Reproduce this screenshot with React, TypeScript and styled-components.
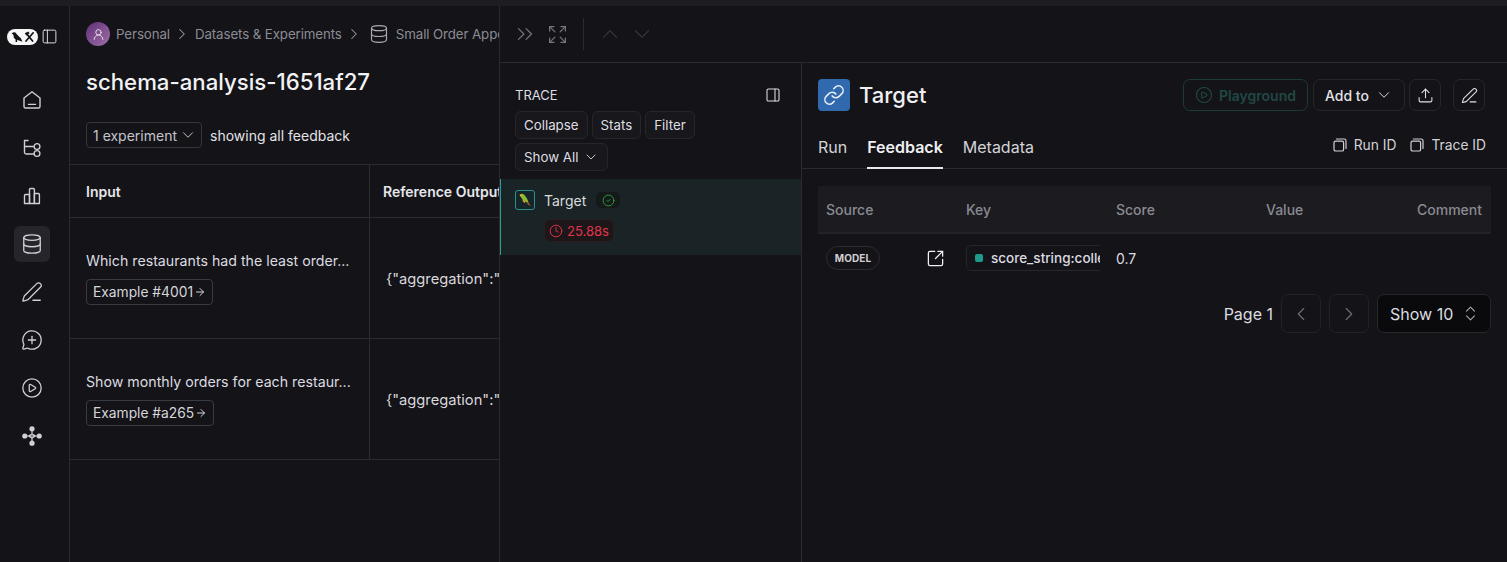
import React from "react";
import styled, { createGlobalStyle } from "styled-components";
import {
  ChevronsRight, Expand, ChevronUp, ChevronDown, ChevronRight, ChevronLeft, PanelLeft, PanelRight,
  Database, PenLine, MessageCirclePlus, CirclePlay, Link, Upload, SquareArrowOutUpRight, ChevronsUpDown,
  Clock, CircleCheck, ArrowRight, UserRound,
} from "lucide-react";

const Global = createGlobalStyle`
  html, body { margin: 0; padding: 0; height: 100%; background: #131318; overflow: hidden; }
  body { font-family: Inter, "Liberation Sans", sans-serif; color: #e8e8ec; }
  #root { height: 100%; }
  * { box-sizing: border-box; }
`;

const Page = styled.div`
  height: 562px; display: flex; flex-direction: column; overflow: hidden; background: #131318;
`;
const TopStrip = styled.div`height: 6px; flex: none; background: #1d1d22;`;
const Body = styled.div`flex: 1; display: flex; min-height: 0;`;

const Sidebar = styled.nav`
  width: 70px; flex: none; border-right: 1px solid #2a2a30; display: flex; flex-direction: column;
`;
const LogoRow = styled.div`
  height: 60px; width: 100%; padding: 1px 0 0 7px; display: flex; align-items: center; gap: 3px; color: #dcdce0;
`;
const NavList = styled.div`margin: 16px 0 0 14px; display: flex; flex-direction: column; gap: 12px;`;
const NavItem = styled.div<{ $active?: boolean }>`
  width: 36px; height: 36px; border-radius: 6px; display: flex; align-items: center; justify-content: center;
  color: #cfcfd4; background: ${(p) => (p.$active ? "#25252b" : "transparent")};
`;

const Left = styled.section`
  width: 429px; flex: none; overflow: hidden; display: flex; flex-direction: column;
`;
const Crumbs = styled.div`
  height: 56px; padding-left: 16px; display: flex; align-items: center; white-space: nowrap; font-size: 13.3px; letter-spacing: -0.1px; color: #8b8b94;
`;
const Avatar = styled.div`
  width: 24px; height: 24px; border-radius: 50%; flex: none; margin-right: 6px; display: flex; align-items: center; justify-content: center;
  background: linear-gradient(135deg, #5f2f78, #a070a8); color: #eee;
`;
const CrumbSep = styled.span`display: flex; margin: 0 4px 0 3px; color: #9a9aa2;`;
const CrumbDb = styled.span`display: flex; margin: 0 7px 0 2px; color: #a8a8b0;`;
const Title = styled.h1`
  margin: 0; padding: 3px 0 0 16px; font-size: 22.2px; line-height: 34px; font-weight: 500; color: #f2f2f4; letter-spacing: 0; white-space: nowrap;
`;
const FilterRow = styled.div`
  margin-top: 23px; padding-left: 16px; display: flex; align-items: center; gap: 8px; font-size: 14px; color: #e4e4e8; white-space: nowrap;
`;
const ExpSelect = styled.div`
  width: 116px; height: 26px; border: 1px solid #36363d; border-radius: 4px; display: flex; align-items: center; justify-content: space-between;
  padding: 0 4px 0 6px; color: #c4c4ca; font-size: 14px;
`;
const Grid = styled.div`
  margin-top: 16px; display: grid; grid-template-columns: 300px 400px; border-top: 1px solid #2a2a30;
`;
const HeadCell = styled.div<{ $right?: boolean }>`
  height: 53px; display: flex; align-items: center; padding-left: ${(p) => (p.$right ? "13px" : "16px")}; font-size: 14px; font-weight: 600; color: #e6e6ea;
  border-bottom: 1px solid #2a2a30; border-right: ${(p) => (p.$right ? "none" : "1px solid #2a2a30")}; white-space: nowrap;
`;
const InputCell = styled.div`
  height: 121px; padding-left: 16px; display: flex; flex-direction: column; justify-content: center; gap: 8px;
  border-bottom: 1px solid #2a2a30; border-right: 1px solid #2a2a30;
`;
const OutCell = styled.div`
  height: 121px; padding: 1px 0 0 16px; display: flex; align-items: center; border-bottom: 1px solid #2a2a30; font-size: 14.7px; color: #d8d8dc; white-space: nowrap;
`;
const Question = styled.div`font-size: 14.2px; line-height: 20px; color: #dcdce0; white-space: nowrap;`;
const ExampleTag = styled.div`
  align-self: flex-start; height: 26px; padding: 0 6px; border: 1px solid #3a3a41; border-radius: 4px; display: flex; align-items: center; gap: 1px; font-size: 13.8px; color: #d6d6da;
`;

const Drawer = styled.section`
  flex: 1; min-width: 0; border-left: 1px solid #2a2a30; display: flex; flex-direction: column;
`;
const DrawerBar = styled.div`
  height: 57px; flex: none; border-bottom: 1px solid #2a2a30; padding-left: 12px; display: flex; align-items: center; color: #77777f;
`;
const BarIconGroup = styled.div`display: flex; align-items: center; gap: 9px; padding-right: 15px; height: 32px; border-right: 1px solid #2a2a30;`;
const BarMuted = styled.div`display: flex; align-items: center; gap: 6px; padding-left: 13px; color: #33333a;`;
const DrawerBody = styled.div`flex: 1; display: flex; min-height: 0;`;

const TracePane = styled.div`width: 302px; flex: none; border-right: 1px solid #2a2a30; display: flex; flex-direction: column;`;
const TraceHead = styled.div`
  padding: 23px 20px 0 15px; display: flex; align-items: center; justify-content: space-between; font-size: 13px; color: #dedee2; height: 40px;
`;
const ToolRow = styled.div`padding: 8px 15px 0; display: flex; flex-wrap: wrap; gap: 4px;`;
const ToolBtn = styled.div`
  height: 28px; padding: 0 8px; border: 1px solid #26262c; border-radius: 6px; display: flex; align-items: center; gap: 5px; font-size: 13.3px; color: #dedee2; background: #17171c;
`;
const RunRow = styled.div`
  margin-top: 8px; height: 76px; background: #1a2427; border-left: 1px solid #2f9d97; padding: 11px 0 0 14px;
`;
const RunTop = styled.div`display: flex; align-items: center; font-size: 14px; color: #d9dcdd;`;
const RunIcon = styled.div`
  width: 20px; height: 20px; border: 1px solid #2f8f8c; border-radius: 3px; background: #14262a; margin-right: 9px; display: flex; align-items: center; justify-content: center;
`;
const CheckPill = styled.div`
  width: 24px; height: 16px; margin-left: 10px; border-radius: 5px; background: #15191a; color: #2aa63a; display: flex; align-items: center; justify-content: center;
`;
const TimePill = styled.div`
  margin: 9px 0 0 29px; width: 70px; height: 23px; border-radius: 6px; background: #1d1719; border: 1px solid #2a1d20; color: #e0344e; font-size: 13px;
  display: flex; align-items: center; justify-content: center; gap: 4px;
`;

const Detail = styled.div`flex: 1; min-width: 0; display: flex; flex-direction: column; padding: 16px 16px 0 16px;`;
const DetailHead = styled.div`display: flex; align-items: center; height: 32px; padding-right: 6px;`;
const ChainIcon = styled.div`
  width: 32px; height: 32px; border-radius: 4px; background: #3069ae; color: #e6eef8; display: flex; align-items: center; justify-content: center; flex: none; margin-right: 9px;
`;
const DetailTitle = styled.div`font-size: 22px; font-weight: 500; color: #f0f0f2; flex: 1;`;
const HeadBtn = styled.div<{ $gap?: number; $disabled?: boolean }>`
  height: 32px; border-radius: 7px; display: flex; align-items: center; justify-content: center; font-size: 14px; font-weight: 500; gap: 6px;
  margin-left: ${(p) => p.$gap ?? 4}px; border: 1px solid ${(p) => (p.$disabled ? "#1d3a3a" : "#26262c")};
  color: ${(p) => (p.$disabled ? "#204844" : "#e2e2e6")};
`;
const PlayBtn = styled(HeadBtn)`width: 125px; font-weight: 600;`;
const AddBtn = styled(HeadBtn)`width: 92px;`;
const SquareBtn = styled(HeadBtn)`width: 32px;`;
const TabBar = styled.div`
  margin: 20px -16px 0; padding: 0 21px 0 16px; height: 38px; flex: none; border-bottom: 1px solid #2a2a30; display: flex; align-items: flex-start; justify-content: space-between;
`;
const Tabs = styled.div`display: flex; gap: 20px;`;
const Tab = styled.div<{ $active?: boolean }>`
  height: 38px; font-size: 16px; line-height: 24px; padding-top: 4px; font-weight: ${(p) => (p.$active ? 600 : 400)}; color: ${(p) => (p.$active ? "#f0f0f2" : "#d4d4d8")};
  border-bottom: 2px solid ${(p) => (p.$active ? "#e8e8ec" : "transparent")};
`;
const IdLinks = styled.div`display: flex; gap: 14px; padding-top: 6px;`;
const IdLink = styled.div`display: flex; align-items: center; gap: 7px; font-size: 13.8px; color: #d2d2d6;`;

const Table = styled.div`margin-top: 17px; width: 673px;`;
const THead = styled.div`
  height: 48px; background: #1b1b20; border-bottom: 2px solid #222227; display: grid; grid-template-columns: 140px 150px 150px 150px 83px; align-items: center; font-size: 14px; font-weight: 500; color: #8a8a92;
`;
const TH = styled.div<{ $right?: boolean }>`padding-left: 8px; ${(p) => p.$right && "text-align: right; padding: 0 9px 0 0; white-space: nowrap;"}`;
const TRow = styled.div`height: 48px; display: grid; grid-template-columns: 140px 150px 150px; align-items: center;`;
const SourceCell = styled.div`display: flex; align-items: center; justify-content: space-between; padding: 0 13px 0 8px; color: #f0f0f2;`;
const ModelPill = styled.div`
  width: 54px; height: 24px; border: 1px solid #2b2b31; border-radius: 12px; display: flex; align-items: center; justify-content: center; font-size: 10px; font-weight: 700; letter-spacing: 0.1px; color: #d0d0d4;
`;
const KeyCell = styled.div`padding-left: 8px; overflow: hidden; width: 142px;`;
const KeyChip = styled.div`
  width: 170px; height: 26px; border: 1px solid #26262c; border-radius: 5px; padding-left: 8px; display: flex; align-items: center; gap: 8px; font-size: 13.5px; font-weight: 500; color: #dcdce0; white-space: nowrap; overflow: hidden;
`;
const Dot = styled.span`width: 8px; height: 8px; border-radius: 2px; background: #1f9b8c; flex: none;`;
const ScoreCell = styled.div`padding-left: 8px; font-size: 14px; color: #dcdce0;`;
const Pager = styled.div`margin-top: 12px; display: flex; align-items: center; justify-content: flex-end; gap: 8px;`;
const PageLabel = styled.div`font-size: 16px; color: #dcdce0;`;
const PageBtn = styled.div`
  width: 40px; height: 39px; border: 1px solid #212126; border-radius: 7px; display: flex; align-items: center; justify-content: center; color: #6f6f77;
`;
const ShowBtn = styled.div`
  width: 114px; height: 39px; background: #0a0a0d; border: 1px solid #26262c; border-radius: 7px; display: flex; align-items: center; justify-content: space-between; padding: 0 10px 0 12px; font-size: 16px; color: #dcdce0;
`;
const UpDown = styled.span`display: flex; color: #a8a8ae;`;

const HomeIcon = () => (
  <svg width="20" height="20" viewBox="0 0 20 20" fill="none" stroke="currentColor" strokeWidth="1.4" strokeLinecap="round" strokeLinejoin="round">
    <path d="M2 8 10 1.8 18 8V16.4A1.6 1.6 0 0 1 16.4 18H3.6A1.6 1.6 0 0 1 2 16.4Z" />
    <path d="M6.5 14.4h7" />
  </svg>
);
const TreeIcon = () => (
  <svg width="20" height="20" viewBox="0 0 20 20" fill="none" stroke="currentColor" strokeWidth="1.4" strokeLinecap="round" strokeLinejoin="round">
    <path d="M2.5 2.5h3.5M2.5 2.5v12A1.6 1.6 0 0 0 4.1 16H11.5" />
    <path d="M2.5 8.5h9" />
    <circle cx="15" cy="8.5" r="2.9" /><circle cx="15" cy="15.5" r="2.9" />
  </svg>
);
const BarsIcon = () => (
  <svg width="20" height="20" viewBox="0 0 20 20" fill="none" stroke="currentColor" strokeWidth="1.4" strokeLinejoin="round">
    <path d="M2.5 17.5V9.5a1 1 0 0 1 1-1H7.5v9Z" />
    <path d="M7.5 17.5V3.5a1 1 0 0 1 1-1h2.9a1 1 0 0 1 1 1v14Z" />
    <path d="M12.4 17.5V7.5h4a1 1 0 0 1 1 1v9Z" />
  </svg>
);
const NodesIcon = () => (
  <svg width="20" height="20" viewBox="0 0 20 20" fill="none" stroke="currentColor" strokeWidth="1.2">
    <g fill="currentColor" stroke="none">
      <circle cx="10" cy="2.8" r="2.6" /><circle cx="2.8" cy="10" r="2.6" /><circle cx="17.2" cy="10" r="2.6" /><circle cx="10" cy="17.2" r="2.6" />
    </g>
    <path d="M10 3v5M4 10h12M10 8 6.5 10 10 12l3.5-2Z" />
    <path d="M10 12v4" />
  </svg>
);
const CopyIcon = () => (
  <svg width="14" height="14" viewBox="0 0 14 14" fill="none" stroke="currentColor" strokeWidth="1.2" strokeLinejoin="round">
    <rect x="1" y="3.2" width="9.6" height="9.8" rx="1.6" />
    <path d="M3.4 1h7.8A1.8 1.8 0 0 1 13 2.8v7.6" strokeLinecap="round" />
  </svg>
);
const Logo = () => (
  <svg width="31" height="16" viewBox="0 0 31 16">
    <rect width="31" height="16" rx="8" fill="#f6f6f6" />
    <path d="M4.6 4.6 6.4 3.2 8.4 3.6 10 5.6 14 9.6 15.4 12.8 12 11.6 10.4 10.8 10 13 8.6 13 8.6 10.6 7 9 6.4 6 5.6 5Z" fill="#111116" />
    <path d="M19.2 4.4 25.6 12M26.2 3.8 19 12" stroke="#111116" strokeWidth="1.7" strokeLinecap="round" />
    <path d="M17.8 4.6 21.4 2.6 22.6 4.2 19.6 6.6Z" fill="#111116" />
  </svg>
);
const Parrot = () => (
  <svg width="16" height="16" viewBox="0 0 16 16">
    <path d="M2.6 3 5 1.8 7 2.6 10 6.6 11.6 10.4 8.6 9.8 5.2 7 3.6 4.4Z" fill="#8dbb35" />
    <path d="M2.6 3 5 1.8 5.4 3.6 3.6 4.4Z" fill="#e9b53a" />
    <path d="M5.2 7 8.6 9.8 7.6 11 5.8 9.2Z" fill="#e0a32c" />
    <path d="M8.6 9.8 11.6 10.4 14 14.4 11 12.6Z" fill="#a3552f" />
  </svg>
);

export default function App() {
  return (
    <Page>
      <Global />
      <TopStrip />
      <Body>
        <Sidebar>
          <LogoRow>
            <Logo />
            <PanelLeft size={17} strokeWidth={1.4} />
          </LogoRow>
          <NavList>
            <NavItem><HomeIcon /></NavItem>
            <NavItem><TreeIcon /></NavItem>
            <NavItem><BarsIcon /></NavItem>
            <NavItem $active><Database size={22} strokeWidth={1.4} /></NavItem>
            <NavItem><PenLine size={22} strokeWidth={1.4} /></NavItem>
            <NavItem><MessageCirclePlus size={22} strokeWidth={1.4} /></NavItem>
            <NavItem><CirclePlay size={22} strokeWidth={1.4} /></NavItem>
            <NavItem><NodesIcon /></NavItem>
          </NavList>
        </Sidebar>
        <Left>
          <Crumbs>
            <Avatar><UserRound size={13} strokeWidth={1.6} /></Avatar>
            Personal
            <CrumbSep><ChevronRight size={18} strokeWidth={1.4} /></CrumbSep>
            Datasets &amp; Experiments
            <CrumbSep><ChevronRight size={18} strokeWidth={1.4} /></CrumbSep>
            <CrumbDb><Database size={20} strokeWidth={1.4} /></CrumbDb>
            Small Order Appeasement Dataset
          </Crumbs>
          <Title>schema-analysis-1651af27</Title>
          <FilterRow>
            <ExpSelect>1 experiment <ChevronDown size={18} strokeWidth={1.3} /></ExpSelect>
            showing all feedback
          </FilterRow>
          <Grid>
            <HeadCell>Input</HeadCell>
            <HeadCell $right>Reference Outputs</HeadCell>
            <InputCell>
              <Question>Which restaurants had the least order...</Question>
              <ExampleTag>Example #4001 <ArrowRight size={12} /></ExampleTag>
            </InputCell>
            <OutCell>{'{"aggregation":"count","filters"'}</OutCell>
            <InputCell>
              <Question>Show monthly orders for each restaur...</Question>
              <ExampleTag>Example #a265 <ArrowRight size={12} /></ExampleTag>
            </InputCell>
            <OutCell>{'{"aggregation":"month","filters"'}</OutCell>
          </Grid>
        </Left>
        <Drawer>
          <DrawerBar>
            <BarIconGroup>
              <ChevronsRight size={26} strokeWidth={1.1} />
              <Expand size={21} strokeWidth={1.4} />
            </BarIconGroup>
            <BarMuted>
              <ChevronUp size={26} strokeWidth={1.1} />
              <ChevronDown size={26} strokeWidth={1.1} />
            </BarMuted>
          </DrawerBar>
          <DrawerBody>
            <TracePane>
              <TraceHead>
                TRACE
                <PanelRight size={16} strokeWidth={1.6} />
              </TraceHead>
              <ToolRow>
                <ToolBtn>Collapse</ToolBtn>
                <ToolBtn>Stats</ToolBtn>
                <ToolBtn>Filter</ToolBtn>
                <ToolBtn>Show All <ChevronDown size={16} strokeWidth={1.3} /></ToolBtn>
              </ToolRow>
              <RunRow>
                <RunTop>
                  <RunIcon><Parrot /></RunIcon>
                  Target
                  <CheckPill><CircleCheck size={13} strokeWidth={1.7} /></CheckPill>
                </RunTop>
                <TimePill><Clock size={14} strokeWidth={1.6} /> 25.88s</TimePill>
              </RunRow>
            </TracePane>
            <Detail>
              <DetailHead>
                <ChainIcon><Link size={22} strokeWidth={1.7} /></ChainIcon>
                <DetailTitle>Target</DetailTitle>
                <PlayBtn $disabled><CirclePlay size={18} strokeWidth={1.5} /> Playground</PlayBtn>
                <AddBtn $gap={5}>Add to <ChevronDown size={18} strokeWidth={1.3} /></AddBtn>
                <SquareBtn><Upload size={17} strokeWidth={1.5} /></SquareBtn>
                <SquareBtn $gap={12}><PenLine size={17} strokeWidth={1.5} /></SquareBtn>
              </DetailHead>
              <TabBar>
                <Tabs>
                  <Tab>Run</Tab>
                  <Tab $active>Feedback</Tab>
                  <Tab>Metadata</Tab>
                </Tabs>
                <IdLinks>
                  <IdLink><CopyIcon /> Run ID</IdLink>
                  <IdLink><CopyIcon /> Trace ID</IdLink>
                </IdLinks>
              </TabBar>
              <Table>
                <THead>
                  <TH>Source</TH><TH>Key</TH><TH>Score</TH><TH>Value</TH><TH $right>Comment</TH>
                </THead>
                <TRow>
                  <SourceCell>
                    <ModelPill>MODEL</ModelPill>
                    <SquareArrowOutUpRight size={19} strokeWidth={1.6} />
                  </SourceCell>
                  <KeyCell><KeyChip><Dot /> score_string:collection</KeyChip></KeyCell>
                  <ScoreCell>0.7</ScoreCell>
                </TRow>
              </Table>
              <Pager>
                <PageLabel>Page 1</PageLabel>
                <PageBtn><ChevronLeft size={22} strokeWidth={1.2} /></PageBtn>
                <PageBtn><ChevronRight size={22} strokeWidth={1.2} /></PageBtn>
                <ShowBtn>Show 10 <UpDown><ChevronsUpDown size={19} strokeWidth={1.4} /></UpDown></ShowBtn>
              </Pager>
            </Detail>
          </DrawerBody>
        </Drawer>
      </Body>
    </Page>
  );
}
